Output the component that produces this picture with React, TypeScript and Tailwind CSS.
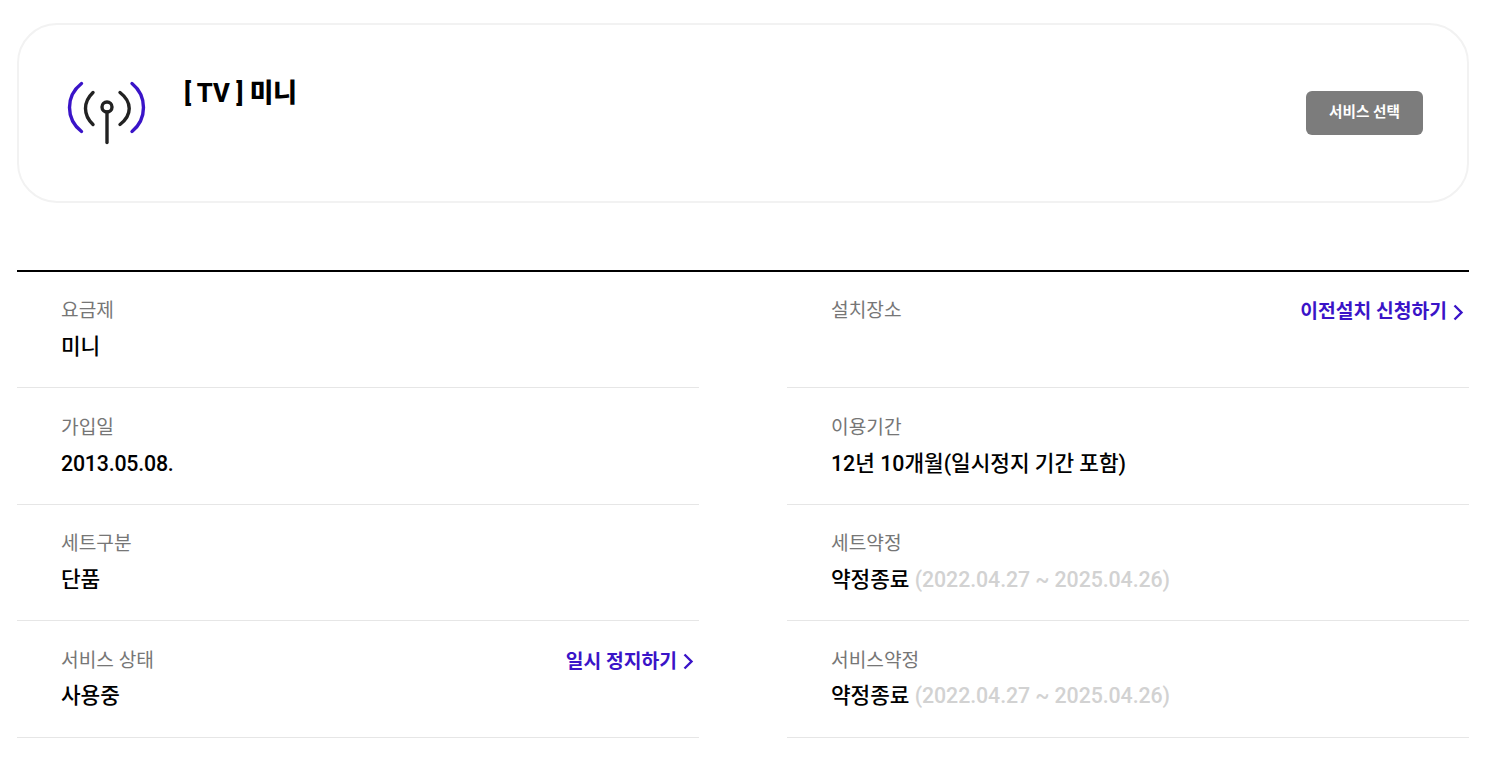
const font = "font-['Roboto','Noto_Sans_CJK_KR',sans-serif]";

type Row = {
  label: string;
  value?: string;
  period?: string;
  link?: string;
  tight?: boolean;
};

const leftRows: Row[] = [
  { label: "요금제", value: "미니" },
  { label: "가입일", value: "2013.05.08.", tight: true },
  { label: "세트구분", value: "단품" },
  { label: "서비스 상태", value: "사용중", link: "일시 정지하기" },
];

const rightRows: Row[] = [
  { label: "설치장소", link: "이전설치 신청하기" },
  { label: "이용기간", value: "12년 10개월(일시정지 기간 포함)" },
  { label: "세트약정", value: "약정종료", period: "(2022.04.27 ~ 2025.04.26)" },
  { label: "서비스약정", value: "약정종료", period: "(2022.04.27 ~ 2025.04.26)" },
];

function AntennaIcon() {
  return (
    <svg width="80" height="66" viewBox="0 0 80 66" fill="none" strokeLinecap="round" strokeWidth="3.400">
      <path d="M14.500 3.500 C-1.500 16 -1.500 39 14.500 51.500" stroke="#3a14c8" />
      <path d="M65 3.500 C80.300 16 80.300 39 65 51.500" stroke="#3a14c8" />
      <path d="M26 12.500 C16 22 16 35 26 44.500" stroke="#222222" />
      <path d="M53 12.500 C65.300 22 65.300 35 53 44.500" stroke="#222222" />
      <circle cx="40" cy="27" r="5" stroke="#222222" />
      <path d="M40 32 V62.500" stroke="#222222" />
    </svg>
  );
}

function Chevron() {
  return (
    <svg width="11" height="17" viewBox="0 0 11 17" fill="none" stroke="#3a14c8" strokeWidth="2.400">
      <path d="M1.500 1.500 L8.500 8.500 L1.500 15.500" />
    </svg>
  );
}

function InfoRow({ row }: { row: Row }) {
  return (
    <div className="flex h-[116.4px] items-start justify-between border-b border-[#e6e6e6] pr-[5px] pl-[44px]">
      <div>
        <div className="mt-[27.4px] h-[24px] text-[19.2px] leading-[24px] text-[#767676]">{row.label}</div>
        <div
          className={`mt-[11.8px] h-[24px] text-[21.33px] leading-[24px] font-medium text-black ${row.tight ? "tracking-[-0.2px]" : ""}`}
        >
          {row.value}
          {row.period && <span className="tracking-[-0.08px] text-[#d2d2d2]"> {row.period}</span>}
        </div>
      </div>
      {row.link && (
        <div className="mt-[28.4px] flex items-center gap-[6px] text-[19.3px] leading-[24px] font-bold text-[#3a14c8]">
          {row.link}
          <Chevron />
        </div>
      )}
    </div>
  );
}

export default function App() {
  return (
    <div className={`${font} h-[759px] w-[1496px] overflow-hidden bg-white pt-[23px] pr-[27px] pl-[17px]`}>
      <div className="flex h-[180px] items-start justify-between rounded-[40px] border-2 border-[#f2f2f2] pt-[55px] pr-[44px] pl-[48px]">
        <div className="flex items-start gap-[37px]">
          <AntennaIcon />
          <h1 className="-mt-[3px] text-[25.6px] leading-[32px] font-extrabold text-black">[ TV ] 미니</h1>
        </div>
        <button className="mt-[11px] h-[44px] w-[117px] rounded-md bg-[#7c7c7c] text-[14.6px] font-bold text-white">
          서비스 선택
        </button>
      </div>

      <div className="mt-[67px] grid grid-cols-2 gap-x-[88px] border-t-2 border-black">
        <div>
          {leftRows.map((row) => (
            <InfoRow key={row.label} row={row} />
          ))}
        </div>
        <div>
          {rightRows.map((row) => (
            <InfoRow key={row.label} row={row} />
          ))}
        </div>
      </div>
    </div>
  );
}
